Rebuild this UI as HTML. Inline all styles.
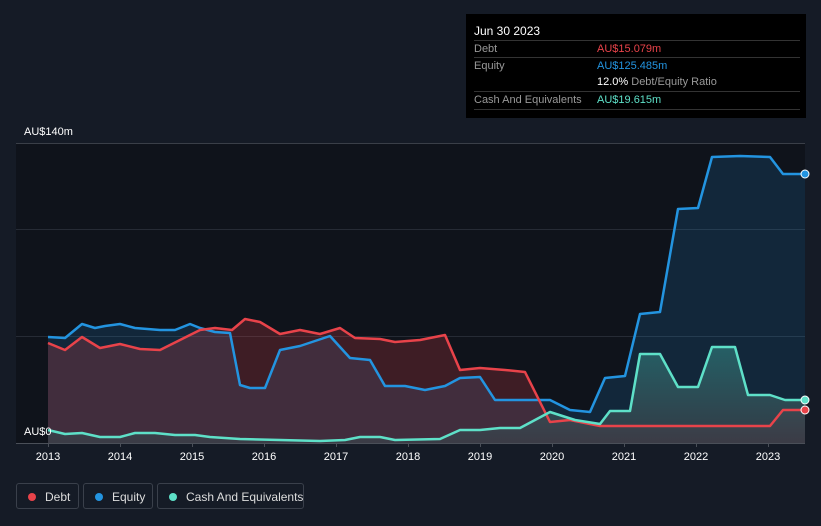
<!DOCTYPE html><html><head><style>
body{margin:0;width:821px;height:526px;background:#151b26;font-family:"Liberation Sans",sans-serif;overflow:hidden;position:relative}
.tip{position:absolute;left:466px;top:14px;width:340px;height:104px;background:#000;}
.row{position:absolute;left:8px;width:326px;border-top:1px solid #333;font-size:11px;color:#999;height:17px;line-height:17px}
.leg{position:absolute;top:483px;height:26px;border:1px solid #3a404b;border-radius:3px;color:#ddd;font-size:12px;line-height:26px;box-sizing:border-box;white-space:nowrap}
.leg i{position:absolute;left:11px;top:9px;width:8px;height:8px;border-radius:50%}
</style></head><body>
<svg width="821" height="526" style="position:absolute;left:0;top:0">
<rect x="16" y="143" width="789" height="300" fill="#0f131b"/>
<line x1="16" y1="143.5" x2="805" y2="143.5" stroke="#3a3f48"/>
<line x1="16" y1="229.5" x2="805" y2="229.5" stroke="#262b35"/>
<line x1="16" y1="336.5" x2="805" y2="336.5" stroke="#262b35"/>
<defs><linearGradient id="g" x1="0" y1="0" x2="0" y2="1"><stop offset="0" stop-color="#2a6d70"/><stop offset="1" stop-color="#3a3f48"/></linearGradient></defs>
<polygon fill="#2394e0" opacity="0.16" points="48,443 48,337 65,338 82,324 95,328 105,326 120,324 135,328 160,330 175,330 190,324 200,328 215,332 230,333 240,385 250,388 265,388 280,350 300,346 330,336 350,358 370,360 385,386 405,386 425,390 445,386 460,378 480,377 495,400 520,400 550,400 570,410 590,412 605,378 625,376 640,314 660,312 678,209 698,208 712,157 740,156 770,157 783,174 805,174 805,443"/>
<polygon fill="#e8434a" opacity="0.22" points="48,443 48,343 65,350 82,337 100,348 120,344 140,349 160,350 180,340 200,330 215,328 232,330 245,319 260,322 280,334 300,330 320,334 340,328 355,338 380,339 395,342 420,340 445,335 460,370 480,368 505,370 525,372 550,422 570,420 600,426 640,426 700,426 770,426 783,410 805,410 805,443"/>
<polygon fill="url(#g)" opacity="0.8" points="48,443 48,430 65,434 82,433 100,437 120,437 135,433 155,433 175,435 195,435 210,437 240,439 280,440 320,441 345,440 360,437 380,437 395,440 440,439 460,430 480,430 500,428 520,428 550,412 575,420 600,424 610,411 630,411 640,354 660,354 678,387 698,387 712,347 735,347 748,395 770,395 785,400 805,400 805,443"/>
<g fill="none" stroke-width="2.5" stroke-linejoin="round">
<polyline stroke="#2394e0" points="48,337 65,338 82,324 95,328 105,326 120,324 135,328 160,330 175,330 190,324 200,328 215,332 230,333 240,385 250,388 265,388 280,350 300,346 330,336 350,358 370,360 385,386 405,386 425,390 445,386 460,378 480,377 495,400 520,400 550,400 570,410 590,412 605,378 625,376 640,314 660,312 678,209 698,208 712,157 740,156 770,157 783,174 805,174"/>
<polyline stroke="#e8434a" points="48,343 65,350 82,337 100,348 120,344 140,349 160,350 180,340 200,330 215,328 232,330 245,319 260,322 280,334 300,330 320,334 340,328 355,338 380,339 395,342 420,340 445,335 460,370 480,368 505,370 525,372 550,422 570,420 600,426 640,426 700,426 770,426 783,410 805,410"/>
<polyline stroke="#5ee0c8" points="48,430 65,434 82,433 100,437 120,437 135,433 155,433 175,435 195,435 210,437 240,439 280,440 320,441 345,440 360,437 380,437 395,440 440,439 460,430 480,430 500,428 520,428 550,412 575,420 600,424 610,411 630,411 640,354 660,354 678,387 698,387 712,347 735,347 748,395 770,395 785,400 805,400"/>
</g>
<circle cx="805" cy="174" r="4" fill="#2394e0" stroke="#fff" stroke-width="1"/>
<circle cx="805" cy="410" r="4" fill="#e8434a" stroke="#fff" stroke-width="1"/>
<circle cx="805" cy="400" r="4" fill="#5ee0c8" stroke="#fff" stroke-width="1"/>
<line x1="16" y1="443.5" x2="805" y2="443.5" stroke="#4a4f58"/>
<g stroke="#4a4f58"><line x1="48.5" y1="443" x2="48.5" y2="447"/><line x1="120.5" y1="443" x2="120.5" y2="447"/><line x1="192.5" y1="443" x2="192.5" y2="447"/><line x1="264.5" y1="443" x2="264.5" y2="447"/><line x1="336.5" y1="443" x2="336.5" y2="447"/><line x1="408.5" y1="443" x2="408.5" y2="447"/><line x1="480.5" y1="443" x2="480.5" y2="447"/><line x1="552.5" y1="443" x2="552.5" y2="447"/><line x1="624.5" y1="443" x2="624.5" y2="447"/><line x1="696.5" y1="443" x2="696.5" y2="447"/><line x1="768.5" y1="443" x2="768.5" y2="447"/></g>
<g fill="#fff" font-size="11" text-anchor="middle" font-family="Liberation Sans"><text x="48" y="460">2013</text><text x="120" y="460">2014</text><text x="192" y="460">2015</text><text x="264" y="460">2016</text><text x="336" y="460">2017</text><text x="408" y="460">2018</text><text x="480" y="460">2019</text><text x="552" y="460">2020</text><text x="624" y="460">2021</text><text x="696" y="460">2022</text><text x="768" y="460">2023</text></g>
<text x="24" y="135" fill="#fff" font-size="11" font-family="Liberation Sans">AU$140m</text>
<text x="24" y="435" fill="#fff" font-size="11" font-family="Liberation Sans">AU$0</text>
</svg>
<div class="tip">
<div style="position:absolute;left:8px;top:10px;color:#fff;font-size:12px">Jun 30 2023</div>
<div class="row" style="top:26px">Debt<span style="position:absolute;left:123px;color:#e8434a">AU$15.079m</span></div>
<div class="row" style="top:43px">Equity<span style="position:absolute;left:123px;color:#2394e0">AU$125.485m</span></div>
<div class="row" style="top:60px;border-top:none"><span style="position:absolute;left:123px;color:#fff">12.0% <span style="color:#999">Debt/Equity Ratio</span></span></div>
<div class="row" style="top:77px">Cash And Equivalents<span style="position:absolute;left:123px;color:#5ee0c8">AU$19.615m</span></div>
<div class="row" style="top:95px;height:0"></div>
</div>
<div class="leg" style="left:16px;width:63px"><i style="background:#e8434a"></i><span style="position:absolute;left:28px">Debt</span></div>
<div class="leg" style="left:83px;width:70px"><i style="background:#2394e0"></i><span style="position:absolute;left:28px">Equity</span></div>
<div class="leg" style="left:157px;width:147px"><i style="background:#5ee0c8"></i><span style="position:absolute;left:28px">Cash And Equivalents</span></div>
</body></html>
